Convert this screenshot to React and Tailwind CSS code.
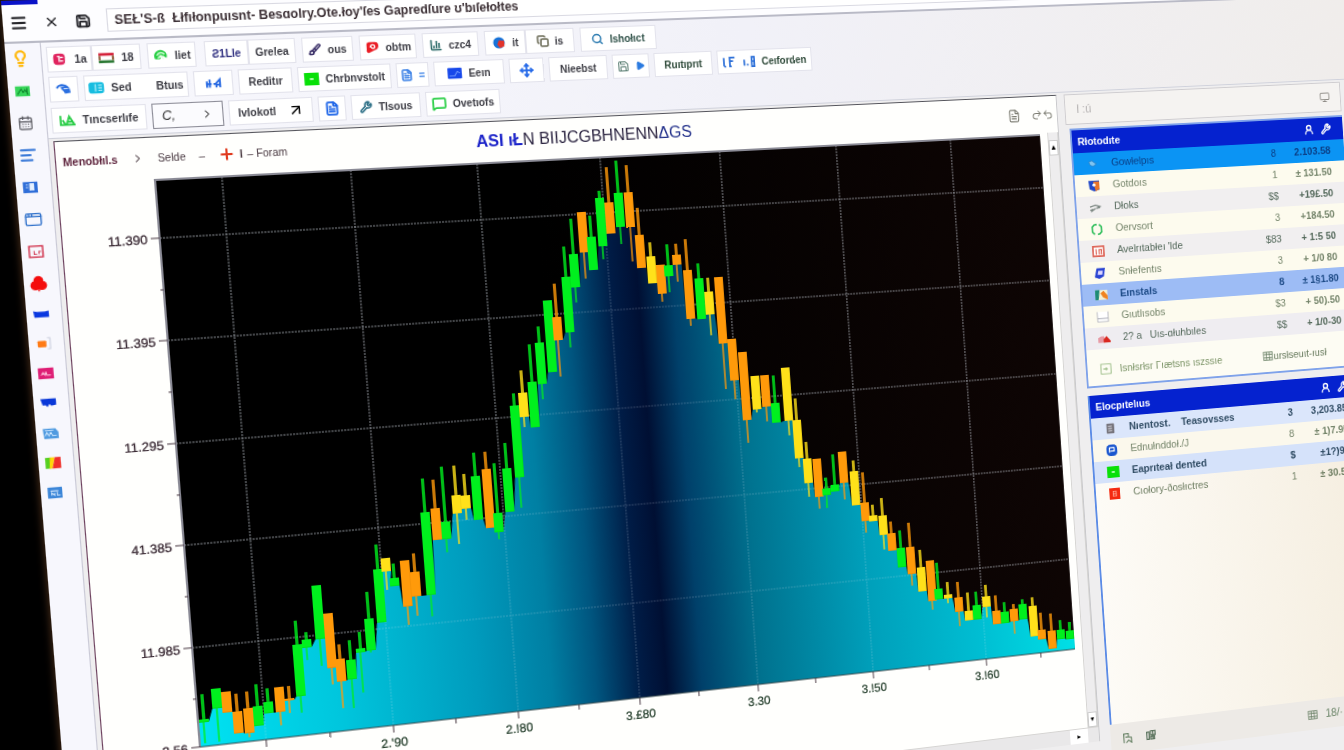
import {
  AlignLeft,
  AppWindow,
  ArrowUpRight,
  Brush,
  CalendarDays,
  ChartColumn,
  ChevronRight,
  Club,
  Copy,
  FileText,
  Lightbulb,
  Menu,
  MessageSquare,
  Monitor,
  Move,
  Play,
  Plus,
  Redo2,
  Save,
  Search,
  Undo2,
  UserRound,
  Wrench,
  X,
} from "lucide-react";

// plane of the tilted monitor, as the entries of a 3x3 projection
const tilt = {
  a: 1.14217,
  b: 0.0875,
  c: 0.908,
  d: -0.03551,
  e: 1.07832,
  f: 0.96,
  g: 0.00012011,
  h: 0.000013655,
};

const tiltMatrix = `matrix3d(${tilt.a},${tilt.d},0,${tilt.g},${tilt.b},${tilt.e},0,${tilt.h},0,0,1,0,${tilt.c},${tilt.f},0,1)`;

// origin of the chart svg on the flat screen
const CHART_X = 37;
const CHART_Y = 171;

// projected point -> point in the chart svg
const unproject = (x, y) => {
  const p = tilt.a - tilt.g * x;
  const q = tilt.b - tilt.h * x;
  const r = tilt.d - tilt.g * y;
  const s = tilt.e - tilt.h * y;
  const det = p * s - q * r;
  const X = ((x - tilt.c) * s - q * (y - tilt.f)) / det;
  const Y = (p * (y - tilt.f) - r * (x - tilt.c)) / det;
  return [Math.round(X - CHART_X), Math.round(Y - CHART_Y)];
};

const G = "#00f01e";
const O = "#ff9a0a";
const Y = "#ffe11a";

// x, high, body top, body bottom, low, colour
const samples = [
  [203, 694, 719, 722, 744, G],
  [215, 689, 689, 709, 742, G],
  [225, 692, 692, 713, 713, O],
  [237, 694, 711, 733, 733, O],
  [247, 692, 708, 733, 738, O],
  [257, 684, 706, 726, 726, G],
  [267, 688, 702, 713, 713, G],
  [278, 687, 687, 712, 726, O],
  [289, 686, 699, 701, 713, O],
  [297, 621, 644, 697, 713, G],
  [306, 632, 639, 648, 660, G],
  [315, 585, 585, 640, 667, G],
  [327, 613, 613, 668, 685, O],
  [339, 644, 659, 682, 709, O],
  [350, 640, 660, 679, 708, G],
  [360, 632, 648, 653, 693, G],
  [368, 592, 619, 651, 653, G],
  [377, 544, 569, 623, 623, G],
  [385, 558, 558, 572, 590, Y],
  [394, 563, 578, 586, 586, G],
  [404, 560, 560, 607, 625, O],
  [414, 553, 572, 597, 616, O],
  [424, 478, 512, 596, 617, G],
  [435, 480, 508, 540, 540, O],
  [445, 466, 522, 539, 553, G],
  [455, 466, 495, 514, 544, Y],
  [465, 474, 495, 509, 520, Y],
  [475, 453, 476, 520, 520, G],
  [486, 452, 469, 528, 528, O],
  [497, 463, 513, 532, 540, G],
  [506, 443, 468, 512, 512, G],
  [514, 393, 406, 478, 508, G],
  [522, 370, 393, 417, 427, Y],
  [531, 344, 382, 428, 428, G],
  [539, 326, 343, 384, 400, G],
  [547, 300, 300, 373, 373, G],
  [556, 284, 317, 340, 377, O],
  [565, 246, 277, 333, 348, G],
  [573, 219, 254, 288, 303, G],
  [581, 212, 212, 253, 279, O],
  [591, 216, 237, 270, 270, G],
  [599, 191, 198, 246, 260, G],
  [608, 167, 202, 234, 234, O],
  [618, 160, 193, 227, 244, G],
  [628, 165, 192, 228, 262, O],
  [639, 208, 235, 268, 268, O],
  [650, 242, 256, 283, 283, Y],
  [660, 265, 265, 294, 302, O],
  [668, 244, 265, 276, 292, G],
  [676, 244, 255, 265, 282, O],
  [687, 239, 270, 319, 326, O],
  [698, 263, 278, 319, 319, G],
  [708, 278, 292, 315, 336, Y],
  [718, 277, 277, 344, 390, O],
  [731, 339, 339, 381, 400, O],
  [742, 352, 352, 421, 443, O],
  [754, 376, 376, 410, 413, Y],
  [764, 375, 375, 407, 422, O],
  [775, 375, 403, 423, 423, G],
  [785, 368, 368, 421, 436, Y],
  [796, 398, 420, 459, 467, Y],
  [807, 442, 459, 483, 497, Y],
  [816, 459, 459, 497, 509, O],
  [826, 478, 488, 495, 508, G],
  [834, 454, 485, 492, 492, G],
  [842, 452, 452, 483, 500, O],
  [853, 460, 471, 506, 506, Y],
  [864, 472, 503, 521, 533, O],
  [873, 505, 515, 521, 521, Y],
  [882, 498, 516, 535, 550, Y],
  [891, 522, 533, 551, 551, O],
  [900, 530, 548, 567, 567, G],
  [910, 523, 547, 574, 586, O],
  [920, 550, 567, 592, 592, Y],
  [929, 561, 561, 601, 610, O],
  [938, 563, 589, 599, 599, G],
  [948, 582, 595, 598, 603, Y],
  [958, 582, 597, 612, 626, O],
  [968, 592, 611, 620, 620, Y],
  [976, 592, 605, 620, 620, G],
  [986, 585, 596, 607, 618, Y],
  [996, 595, 611, 624, 624, O],
  [1004, 602, 612, 623, 623, G],
  [1013, 604, 609, 621, 634, O],
  [1022, 599, 604, 619, 619, G],
  [1032, 597, 606, 637, 637, Y],
  [1041, 613, 630, 639, 639, O],
  [1051, 613, 631, 649, 649, O],
  [1060, 620, 630, 639, 639, G],
  [1069, 622, 631, 639, 639, G],
];

const candles = samples.map(([x, high, top, bottom, low, color]) => {
  const [cx, y1] = unproject(x, top);
  return {
    cx,
    color,
    top: y1,
    bottom: unproject(x, bottom)[1],
    high: unproject(x, high)[1],
    low: unproject(x, low)[1],
  };
});

const area =
  `M87 542 L87 ${candles[0].bottom} ` +
  candles.map((c) => `L${c.cx - 4} ${c.bottom} L${c.cx + 5} ${c.bottom}`).join(" ") +
  ` L972 ${candles[candles.length - 1].bottom} L972 542 Z`;

const rows = [
  { y: 57, label: "11.390" },
  { y: 154, label: "11.395" },
  { y: 252, label: "11.295" },
  { y: 349, label: "41.385" },
  { y: 447, label: "11.985" },
  { y: 542, label: "3.56" },
];

const cols = [
  { x: 148 },
  { x: 268, label: "2.'90" },
  { x: 389, label: "2.!80" },
  { x: 510, label: "3.£80" },
  { x: 631, label: "3.30" },
  { x: 752, label: "3.!50" },
  { x: 874, label: "3.!60" },
];

const Chart = () => (
  <svg viewBox="0 0 980 600" className="block w-full" role="img" aria-label="Price chart">
    <defs>
      <linearGradient id="fill" x1="87" x2="972" y1="0" y2="0" gradientUnits="userSpaceOnUse">
        <stop offset="0" stopColor="#00e2f2" />
        <stop offset="0.15" stopColor="#00c6dd" />
        <stop offset="0.3" stopColor="#009bbd" />
        <stop offset="0.38" stopColor="#007fa3" />
        <stop offset="0.43" stopColor="#00557f" />
        <stop offset="0.48" stopColor="#001c46" />
        <stop offset="0.51" stopColor="#000f33" />
        <stop offset="0.55" stopColor="#00406a" />
        <stop offset="0.62" stopColor="#00728f" />
        <stop offset="0.75" stopColor="#009fba" />
        <stop offset="0.88" stopColor="#00bdd2" />
        <stop offset="1" stopColor="#00e0e6" />
      </linearGradient>
      <linearGradient id="night" x1="0" x2="1" y1="0" y2="0">
        <stop offset="0.4" stopColor="#000000" />
        <stop offset="1" stopColor="#0e0504" />
      </linearGradient>
    </defs>
    <rect x="87" y="2" width="885" height="540" fill="url(#night)" />
    <path d={area} fill="url(#fill)" />
    <g stroke="#dfe6f0" strokeWidth="1" strokeDasharray="2 1" opacity="0.6">
      {rows.slice(0, 5).map((r) => (
        <line key={r.y} x1="87" x2="972" y1={r.y} y2={r.y} />
      ))}
      {cols.map((c) => (
        <line key={c.x} x1={c.x} x2={c.x} y1="2" y2="542" />
      ))}
    </g>
    <path d={area} fill="url(#fill)" opacity="0.6" />
    {candles.map((c) => (
      <g key={c.cx} fill={c.color}>
        <rect x={c.cx - 1} y={c.high} width="3" height={Math.max(c.top - c.high, 0)} opacity="0.8" />
        <rect x={c.cx - 1} y={c.bottom} width="2" height={Math.max(c.low - c.bottom, 0)} opacity="0.7" />
        <rect x={c.cx - 4} y={c.top} width="9" height={Math.max(c.bottom - c.top, 2)} />
      </g>
    ))}
    <path d="M87 542 V2 H972" fill="none" stroke="#8b8b96" strokeWidth="2" />
    <path d="M87 542 H972" stroke="#36484c" />
    <g stroke="#4b3b45">
      {rows.map((r) => (
        <line key={r.y} x1="79" x2="87" y1={r.y} y2={r.y} />
      ))}
      {rows.slice(0, 5).map((r) => (
        <line key={r.y} x1="84" x2="87" y1={r.y + 49} y2={r.y + 49} />
      ))}
      {cols.map((c) => (
        <line key={c.x} x1={c.x} x2={c.x} y1="542" y2="549" />
      ))}
      {cols.map((c) => (
        <line key={c.x} x1={c.x + 60} x2={c.x + 60} y1="542" y2="547" />
      ))}
    </g>
    <g fontSize="12" fill="#3a2a34" stroke="#3a2a34" strokeWidth="0.3" textAnchor="end">
      {rows.map((r) => (
        <text key={r.y} x="76" y={r.y + 5}>
          {r.label}
        </text>
      ))}
    </g>
    <g fontSize="12" fill="#2d4634" stroke="#2d4634" strokeWidth="0.3" textAnchor="middle">
      {cols.slice(1).map((c) => (
        <text key={c.x} x={c.x} y="563">
          {c.label}
        </text>
      ))}
    </g>
  </svg>
);

// small coloured tiles used for the glyphs that have no line icon
const Tile = ({ kind }) => (
  <svg viewBox="0 0 16 14" className="h-3 w-3.5 shrink-0">
    {kind === "flag" && (
      <>
        <path d="M0 2h16v3H0z" fill="#d4233b" />
        <path d="M0 10h16v3H0z" fill="#2d7a36" />
        <path d="M1 5v5M15 5v5" stroke="#8a5530" strokeWidth="2" />
      </>
    )}
    {kind === "info" && (
      <>
        <rect x="2" y="1" width="12" height="12" rx="4" fill="#e0245e" />
        <path d="M6 4h2v6M9 5h3M9 9h3" stroke="#fff" strokeWidth="1.5" fill="none" />
      </>
    )}
    {kind === "swirl" && (
      <>
        <path d="M2 11C-1 5 4 1 8 1s8 4 6 9l-4-3-3 4z" fill="#26cf42" />
        <path d="M4 7c2-4 6-4 8-1M5 10l3-3 3 4" stroke="#e2ffe4" strokeWidth="1.5" fill="none" />
      </>
    )}
    {kind === "cloud" && (
      <>
        <path d="M1 6c1-4 8-5 11-1H6c0 3 3 4 5 3" stroke="#2b6fe0" strokeWidth="2" fill="none" />
        <path d="M7 8l7-2 1 5-6 1z" fill="#2b6fe0" />
      </>
    )}
    {kind === "pulse" && (
      <path d="M1 5v7M4 3v9M1 8h5M8 8h2M11 12V7l4-4v9M11 9h4" stroke="#2467e2" strokeWidth="2" fill="none" />
    )}
    {kind === "peaks" && (
      <path d="M1 2v10h5L3 7M7 12l3-9 5 9zM9 9h4" stroke="#27cc45" strokeWidth="2" fill="none" />
    )}
    {kind === "teal" && (
      <>
        <rect x="0" y="1" width="16" height="12" rx="3" fill="#16bde0" />
        <path d="M7 3v8M10 4h4M10 7h4M10 10h4" stroke="#e4fbff" />
      </>
    )}
    {kind === "lime" && (
      <>
        <rect width="16" height="14" fill="#08e008" />
        <path d="M6 7h4" stroke="#c6ffc6" strokeWidth="2" />
      </>
    )}
    {kind === "blue" && (
      <>
        <rect x="0" y="1" width="16" height="12" rx="1" fill="#1748ea" />
        <path d="M2 10h6l3-5 3 2" stroke="#7fa6ff" fill="none" />
      </>
    )}
    {kind === "royal" && <path d="M0 4l4 1h8l4-1v7H1z" fill="#0a38e0" />}
    {kind === "goggles" && <path d="M0 2h16v7l-5 1-2-2-2 3-2-2H2z" fill="#0a38d8" />}
    {kind === "orange" && (
      <>
        <path d="M12 1h3v12h-3" stroke="#c3c8d8" fill="none" />
        <rect x="2" y="4" width="9" height="7" rx="1" fill="#ff7a14" />
      </>
    )}
    {kind === "pink" && (
      <>
        <rect x="0" y="1" width="16" height="12" fill="#de1d74" />
        <path d="M3 9l2-3 2 3 1-4 1 4h4" stroke="#ffc7e0" fill="none" />
      </>
    )}
    {kind === "steel" && (
      <>
        <path d="M0 2h13l3 4v7H1z" fill="#4f9ae0" />
        <path d="M2 10l2-4 2 4 2-4 2 4h4M2 4h9" stroke="#d6ecff" fill="none" />
      </>
    )}
    {kind === "traffic" && (
      <>
        <rect x="0" y="1" width="6" height="12" fill="#56d020" />
        <path d="M5 1h5l-3 12H4z" fill="#ffd60a" />
        <path d="M10 1h6v12H7z" fill="#f0302a" />
      </>
    )}
    {kind === "azure" && (
      <>
        <rect x="0" y="1" width="15" height="12" fill="#3c86d8" />
        <path d="M3 5h8M4 10V7l3 3V7M10 6v4h3" stroke="#e0f0ff" fill="none" />
      </>
    )}
    {kind === "green" && (
      <>
        <rect x="0" y="2" width="15" height="11" fill="#38d65a" />
        <path d="M2 11l4-6 2 4 2-3 3 5M12 4v7" stroke="#0a7e28" fill="none" />
      </>
    )}
    {kind === "dock" && (
      <>
        <rect x="0" y="1" width="15" height="12" fill="#2f6ed8" />
        <path d="M3 4h2M3 7h2M7 3h4v7H7z" fill="#e6f1ff" stroke="#e6f1ff" />
      </>
    )}
    {kind === "ball" && (
      <>
        <circle cx="8" cy="7" r="6.5" fill="#1672d8" />
        <path d="M8 4l6 1v6l-5 2-3-4z" fill="#e2342c" />
      </>
    )}
    {kind === "redball" && (
      <>
        <path d="M2 4q0-3 3-3h6q4 0 4 4t-4 5l-7 3q-3-1-2-4z" fill="#ea1c24" />
        <path d="M6 7c0-4 5-4 5-1s-4 2-4 0" stroke="#fff" strokeWidth="1.5" fill="none" />
      </>
    )}
    {kind === "redbox" && (
      <>
        <rect x="1" y="1" width="14" height="12" fill="none" stroke="#cf2a45" strokeWidth="1.5" />
        <path d="M6 6v4h3M11 10V7h2" stroke="#cf2a45" fill="none" />
      </>
    )}
    {kind === "shield" && (
      <>
        <path d="M1 1h14v11l-7 2-6-3z" fill="#2148c8" />
        <path d="M7 2h8v9l-5 3z" fill="#e9752b" />
        <circle cx="8" cy="6" r="2" fill="#fff" />
      </>
    )}
    {kind === "quill" && <path d="M1 6l7-2 6 2-5 2 5-1M2 12l6-4M1 10l4-1" stroke="#7c8782" strokeWidth="1.5" fill="none" />}
    {kind === "frame" && (
      <>
        <rect x="1" y="1" width="14" height="12" fill="#fff" stroke="#dd6154" strokeWidth="2" />
        <path d="M5 4v7M9 11V5h3v6" stroke="#dd6154" strokeWidth="1.5" fill="none" />
      </>
    )}
    {kind === "ring" && (
      <path d="M5 1L2 4v6l3 3M11 1l3 3v6l-3 3M5 1h3M9 13h2" fill="none" stroke="#2bbd58" strokeWidth="2" />
    )}
    {kind === "badge" && (
      <>
        <path d="M4 1h11l-2 10-6 3-6-2z" fill="#2a44d2" />
        <path d="M6 4h6l-1 5H5z" fill="#dcd6ff" />
      </>
    )}
    {kind === "photo" && (
      <>
        <rect x="0" y="1" width="16" height="12" fill="#f3f0d4" />
        <path d="M0 1h6L4 13H0z" fill="#1d8b76" />
        <path d="M7 5l4-3 5 6v5l-6-3z" fill="#f0831f" />
      </>
    )}
    {kind === "tray" && <path d="M1 1v12h14V1M1 9h14" fill="#fff" stroke="#a9aab5" />}
    {kind === "cars" && (
      <>
        <path d="M0 6l4-2h4v8H0z" fill="#e79aa5" />
        <path d="M7 8l4-4 5 6v2H7z" fill="#d9271e" />
      </>
    )}
    {kind === "server" && (
      <>
        <rect x="3" y="1" width="10" height="12" rx="1" fill="#77757d" />
        <path d="M5 4h5M5 7h5M5 10h5" stroke="#ececf2" />
      </>
    )}
    {kind === "dot" && (
      <>
        <rect x="1" y="0" width="14" height="14" rx="5" fill="#1a56cf" />
        <path d="M5 10V4h6v4H6" stroke="#fff" strokeWidth="1.5" fill="none" />
      </>
    )}
    {kind === "stop" && (
      <>
        <rect x="1" width="14" height="14" fill="#f42a10" />
        <path d="M6 4h4v6H6zM6 7h4" stroke="#ffb09c" fill="none" />
      </>
    )}
    {kind === "bird" && <path d="M3 5l4-2 4 3 2 1-4 3-4-1z" fill="#7fc4f0" stroke="#2a86cc" />}
    {kind === "check" && (
      <>
        <rect x="1" y="1" width="13" height="12" fill="none" stroke="#87b070" />
        <path d="M4 7h6M8 5v4" stroke="#87b070" />
      </>
    )}
    {kind === "bars" && (
      <path d="M1 2v9l2 2M8 13V2h6M8 6h4M7 12h3" stroke="#2c6fd8" strokeWidth="2" fill="none" />
    )}
    {kind === "figures" && <path d="M2 5v7M5 11h2M11 2h3v11h-3zM11 7h3" stroke="#2c6fd8" strokeWidth="2" fill="none" />}
    {kind === "grid" && (
      <path d="M2 2h12v10H2zM2 5h12M2 9h12M6 2v10M10 2v10" stroke="#6c8268" fill="none" />
    )}
    {kind === "pages" && <path d="M3 13V2h6v4H5M9 6l4 1v6l-4-3-3 3" stroke="#6a8467" strokeWidth="1.5" fill="none" />}
    {kind === "ledger" && <path d="M3 3h3v9H3zM8 2h6v5H8zM8 9h5v3H8zM11 2v10" stroke="#57705a" strokeWidth="1.5" fill="none" />}
  </svg>
);

const ToolButton = ({ width, children }) => (
  <button
    type="button"
    className={`flex h-6 shrink-0 items-center justify-center gap-1.5 overflow-hidden border border-[#e3e3ec] bg-white text-[10px] font-bold whitespace-nowrap text-[#3c3c44] ${width}`}
  >
    {children}
  </button>
);

const Toolbar = () => (
  <div className="flex flex-col gap-1 bg-linear-to-r from-[#f8f8fd] via-[#f1f1f8] to-[#f0edeb] pt-1 pb-1 pl-1 text-[#3c3c44]">
    <div className="flex gap-1.5">
      <div className="flex">
        <ToolButton width="w-10">
          <Tile kind="info" />
          1a
        </ToolButton>
        <ToolButton width="w-11">
          <Tile kind="flag" />
          18
        </ToolButton>
      </div>
      <ToolButton width="w-11">
        <Tile kind="swirl" />
        liet
      </ToolButton>
      <div className="flex pl-0.5">
        <ToolButton width="w-10">
          <span className="text-[#303080]">Ƨ1Lle</span>
        </ToolButton>
        <ToolButton width="w-11">Grelea</ToolButton>
      </div>
      <ToolButton width="w-12">
        <Brush className="size-3 text-[#3a2f68]" strokeWidth={3} />
        ous
      </ToolButton>
      <ToolButton width="w-[54px]">
        <Tile kind="redball" />
        obtm
      </ToolButton>
      <ToolButton width="w-[54px]">
        <ChartColumn className="size-3 text-[#2a6a68]" strokeWidth={3} />
        czc4
      </ToolButton>
      <div className="flex">
        <ToolButton width="w-10">
          <Tile kind="ball" />
          it
        </ToolButton>
        <ToolButton width="w-12">
          <Copy className="size-3 text-[#6a6a55]" strokeWidth={3} />
          is
        </ToolButton>
      </div>
      <ToolButton width="w-19">
        <Search className="size-3 text-[#2a7ab0]" strokeWidth={3} />
        <span className="text-[#2f5148]">Ishołıct</span>
      </ToolButton>
    </div>

    <div className="flex gap-[5px]">
      <ToolButton width="w-[26px]">
        <Tile kind="cloud" />
      </ToolButton>
      <ToolButton width="w-[94px]">
        <Tile kind="teal" />
        Sed
        <span className="pl-4">Btuıs</span>
      </ToolButton>
      <ToolButton width="w-9">
        <Tile kind="pulse" />
      </ToolButton>
      <ToolButton width="w-[50px]">Reditır</ToolButton>
      <ToolButton width="w-[88px]">
        <Tile kind="lime" />
        Chrbnvstolt
      </ToolButton>
      <ToolButton width="w-[31px]">
        <FileText className="size-3 text-[#3a80e6]" strokeWidth={3} />
        <span className="text-[#3a80e6]">=</span>
      </ToolButton>
      <ToolButton width="w-[68px]">
        <Tile kind="blue" />
        Eeın
      </ToolButton>
      <ToolButton width="w-[34px]">
        <Move className="size-3.5 text-[#2368e8]" strokeWidth={3} />
      </ToolButton>
      <ToolButton width="w-[58px]">Nieebst</ToolButton>
      <ToolButton width="w-[37px]">
        <Save className="size-3 text-[#557a6e]" />
        <Play className="size-2.5 text-[#2a7ae0]" fill="currentColor" />
      </ToolButton>
      <ToolButton width="w-[59px]">
        <span className="text-[#2f4a3a]">Ruıtıprıt</span>
      </ToolButton>
      <ToolButton width="w-[98px]">
        <Tile kind="bars" />
        <Tile kind="figures" />
        <span className="text-[#2f4a3a]">Ceıforden</span>
      </ToolButton>
    </div>

    <div className="flex gap-[5px] pt-px">
      <ToolButton width="w-[85px]">
        <Tile kind="peaks" />
        Tıncserlıfe
      </ToolButton>
      <button
        type="button"
        aria-label="Range"
        className="flex h-6 w-[65px] items-center justify-between border border-[#8d8d98] bg-[#fbfbfe] px-2 text-xs text-[#333]"
      >
        <i>C,</i>
        <ChevronRight className="size-3" />
      </button>
      <ToolButton width="w-[78px]">
        lvIokotl
        <ArrowUpRight className="ml-1 size-4 text-black" />
      </ToolButton>
      <ToolButton width="w-[26px]">
        <FileText className="size-3.5 text-[#1f66e8]" strokeWidth={3} />
      </ToolButton>
      <ToolButton width="w-[66px]">
        <Wrench className="size-3 text-[#2c6f86]" strokeWidth={3} />
        Tlsous
      </ToolButton>
      <ToolButton width="w-[72px]">
        <MessageSquare className="size-3.5 text-[#2fd04a]" strokeWidth={3} />
        Ovetıofs
      </ToolButton>
    </div>
  </div>
);

const RailItem = ({ label, children }) => (
  <button type="button" aria-label={label} className="flex h-7 w-full items-center justify-center">
    {children}
  </button>
);

const Rail = () => (
  <nav className="flex w-8 shrink-0 flex-col border-r border-[#c9c9d6] bg-[#f7f7fd] pr-1.5">
    <div className="flex flex-col gap-0.5">
      <RailItem label="Ideas">
        <Lightbulb className="size-4 text-[#ffb80a]" strokeWidth={3} />
      </RailItem>
      <RailItem label="Gallery">
        <Tile kind="green" />
      </RailItem>
      <RailItem label="Calendar">
        <CalendarDays className="size-3.5 text-[#5b5b62]" />
      </RailItem>
      <RailItem label="Notes">
        <AlignLeft className="size-4 text-[#3a7ad8]" strokeWidth={3} />
      </RailItem>
      <RailItem label="Dock">
        <Tile kind="dock" />
      </RailItem>
      <RailItem label="Window">
        <AppWindow className="size-4 text-[#3474cc]" strokeWidth={2} />
      </RailItem>
      <RailItem label="Frame">
        <Tile kind="redbox" />
      </RailItem>
      <RailItem label="Alerts">
        <Club className="size-4 text-[#f40d0d]" fill="currentColor" />
      </RailItem>
    </div>
    {["royal", "orange", "pink", "goggles", "steel", "traffic", "azure"].map((kind) => (
      <RailItem key={kind} label={kind}>
        <Tile kind={kind} />
      </RailItem>
    ))}
  </nav>
);

const holdings = [
  { icon: "bird", name: "Gowłelpıs", count: "8", value: "2.103.58", tone: "bg-[#0b94f4] text-[#0b3f86]" },
  { icon: "shield", name: "Gotdoıs", count: "1", value: "± 131.50", tone: "bg-[#fdfbee] text-[#74846a]" },
  { icon: "quill", name: "Dłoks", count: "$$", value: "+19£.50", tone: "bg-[#f1eff0] text-[#53685a]" },
  { icon: "ring", name: "Oervsort", count: "3", value: "+184.50", tone: "bg-[#fdfbee] text-[#74846a]" },
  { icon: "frame", name: "Avelrıtabłeı 'lde", count: "$83", value: "+ 1:5 50", tone: "bg-[#f1eff0] text-[#53685a]" },
  { icon: "badge", name: "Snłefentıs", count: "3", value: "+ 1/0 80", tone: "bg-[#fdfbee] text-[#74846a]" },
  { icon: "photo", name: "Eınstals", count: "8", value: "± 1§1.80", tone: "bg-[#9dbcf5] text-[#1c4a86] font-bold" },
  { icon: "tray", name: "Gıutlısobs", count: "$3", value: "+ 50).50", tone: "bg-[#fdfbee] text-[#74846a]" },
  { icon: "cars", name: "2? a   Uıs-ɑłuhbıles", count: "$$", value: "+ 1/0-30", tone: "bg-[#efedf1] text-[#53685a]" },
];

const operations = [
  { icon: "server", name: "Nıentost.    Teasovsses", count: "3", value: "3,203.85", tone: "bg-[#dbe6fb] text-[#2f4b63] font-bold" },
  { icon: "dot", name: "Ednułnddoł./J", count: "8", value: "± 1)7.95", tone: "bg-[#fbf8ec] text-[#74846a]" },
  { icon: "lime", name: "Eaprıteał dented", count: "$", value: "±1?)98", tone: "bg-[#d5e2fa] text-[#2f4b63] font-bold" },
  { icon: "stop", name: "Cıołory-ðosłıctres", count: "1", value: "± 30.58", tone: "text-[#6c7c60]" },
];

const PanelTitle = ({ children }) => (
  <div className="flex h-6 items-center justify-between bg-[#0522cf] px-1.5 text-[11px] font-bold text-white">
    <h2>{children}</h2>
    <div className="flex gap-2 pr-2">
      <button type="button" aria-label="Account">
        <UserRound className="size-3" strokeWidth={3} />
      </button>
      <button type="button" aria-label="Tools">
        <Wrench className="size-3" strokeWidth={3} />
      </button>
    </div>
  </div>
);

const Quotes = ({ items }) => (
  <table className="w-full table-fixed border-collapse text-[11px]">
    <tbody>
      {items.map((item) => (
        <tr key={item.name} className={`h-[23px] ${item.tone}`}>
          <td className="w-[42px] pl-3.5">
            <Tile kind={item.icon} />
          </td>
          <td className="whitespace-pre">{item.name}</td>
          <td className="w-12 text-right">{item.count}</td>
          <td className="w-20 pr-4 text-right font-bold">{item.value}</td>
        </tr>
      ))}
    </tbody>
  </table>
);

const SidePanels = () => (
  <aside className="mb-14 flex w-[329px] shrink-0 flex-col pr-4">
    <div className="-ml-1 flex h-8 items-center justify-between border border-[#cfcdd0] bg-[#f5f3f1] px-3 text-xs text-[#b5b2b2]">
      <span>I :ú</span>
      <Monitor className="size-3 text-[#8e8b86]" />
    </div>
    <section className="mt-1 border-2 border-r-0 border-[#7fa2ea] bg-[#fdfcf3]">
      <PanelTitle>Rłotodıte</PanelTitle>
      <Quotes items={holdings} />
      <div className="flex h-[38px] items-center gap-2 pt-1 pl-3.5 text-[11px] text-[#7c9467]">
        <Tile kind="check" />
        <span>Isnłsrłsr Γıætsns ıszssıe</span>
        <span className="ml-auto flex items-center pr-9 text-[#66795c]">
          <Tile kind="grid" />
          ursłseuıt-ıusł
        </span>
      </div>
    </section>
    <section className="mt-2 flex grow flex-col border-l-2 border-[#5b8be6] bg-linear-to-r from-[#fdfbf6] to-[#f5eee0]">
      <PanelTitle>Elocpıtelıus</PanelTitle>
      <Quotes items={operations} />
    </section>
    <footer className="flex h-8 items-center gap-3 bg-[#edeae6] px-3 text-xs text-[#6a8467]">
      <Tile kind="pages" />
      <Tile kind="ledger" />
      <span className="ml-auto flex items-center gap-2 pr-8">
        <Tile kind="grid" />
        18/·
      </span>
    </footer>
  </aside>
);

const ChartPanel = () => (
  <section className="mb-18 flex flex-1 flex-col border-t border-r border-l border-t-[#55555c] border-r-[#c9c9cc] border-l-[#6b3f5c] bg-[#fffffd]">
    <header className="grid h-[38px] grid-cols-3 items-center pr-1 pl-1.5">
      <div className="flex items-center gap-3 text-[10px] text-[#4a3a42]">
        <b className="text-[#5a1f38]">Menobłıl.s</b>
        <ChevronRight className="size-3" />
        <span>Selde</span>
        <span>–</span>
        <span className="flex items-center gap-1">
          <Plus className="size-4 text-[#e0391d]" strokeWidth={3} />
          <b>I</b> – Foram
        </span>
      </div>
      <h1 className="text-center text-base whitespace-nowrap text-[#2b2440]">
        <span className="font-bold text-[#1a22c8]">ASI ıŁ</span>N BIIJCGBHNENN<span className="text-[#22308a]">ΔGS</span>
      </h1>
      <div className="flex items-center justify-end gap-3 text-[#7c7c72]">
        <button type="button" aria-label="Copy">
          <FileText className="size-3.5" />
        </button>
        <button type="button" aria-label="Undo" className="flex">
          <Redo2 className="size-3" />
          <Undo2 className="size-3" />
        </button>
      </div>
    </header>
    <div className="flex grow">
      <div className="min-w-0 flex-1">
        <Chart />
      </div>
      <div className="flex w-3 flex-col justify-between border-x border-[#d6d5d3] bg-[#eeedee]">
        <button
          type="button"
          aria-label="Scroll up"
          className="mt-2 flex h-4 items-center justify-center border border-[#ccc] bg-white text-[8px]"
        >
          ▲
        </button>
        <button
          type="button"
          aria-label="Scroll down"
          className="flex h-4 items-center justify-center border border-[#ccc] bg-white text-[8px]"
        >
          ▾
        </button>
      </div>
    </div>
    <div className="flex h-4 justify-end border-t border-[#d6d5d3] bg-[#e9e8e9] pr-3">
      <button type="button" aria-label="Scroll right" className="w-5 bg-white text-[8px] leading-3">
        ▸
      </button>
    </div>
  </section>
);

export default function App() {
  return (
    <div className="h-screen overflow-hidden bg-black font-['Liberation_Sans',Arial,sans-serif]">
      <div
        className="flex min-h-[118vh] w-[102vw] origin-top-left flex-col bg-[#eceaec] shadow-[0_0_6px_2px_#3a2414]"
        style={{ transform: tiltMatrix }}
      >
        <header className="flex h-10 flex-col border-b-2 border-[#b9bac6] bg-[#fdfdff] text-[#26262b]">
          <div className="h-1 w-8 bg-[#0a12c8]" />
          <div className="flex grow items-center gap-3.5 pl-1.5">
            <button type="button" aria-label="Menu">
              <Menu className="size-4" strokeWidth={3} />
            </button>
            <button type="button" aria-label="Close">
              <X className="size-3.5" />
            </button>
            <button type="button" aria-label="Save">
              <Save className="size-3.5" strokeWidth={3} />
            </button>
            <input
              aria-label="Address"
              defaultValue="SEŁ'S-ß  Łłfıłonpuısnt- Besɑolry.Ote.łoy'ſes Gapredſure ʊ'bıſełołtes"
              className="h-[22px] min-w-0 flex-1 border border-r-0 border-[#d9d9e2] bg-white pl-1.5 text-xs font-bold text-[#3d3136]"
            />
          </div>
        </header>
        <div className="flex grow">
          <Rail />
          <div className="flex min-w-0 grow flex-col">
            <Toolbar />
            <div className="flex grow border-t border-[#d0d2dc] bg-[#efeeef] pt-0.5 pl-1">
              <ChartPanel />
              <div className="w-3 shrink-0" />
              <SidePanels />
            </div>
          </div>
        </div>
      </div>
    </div>
  );
}
